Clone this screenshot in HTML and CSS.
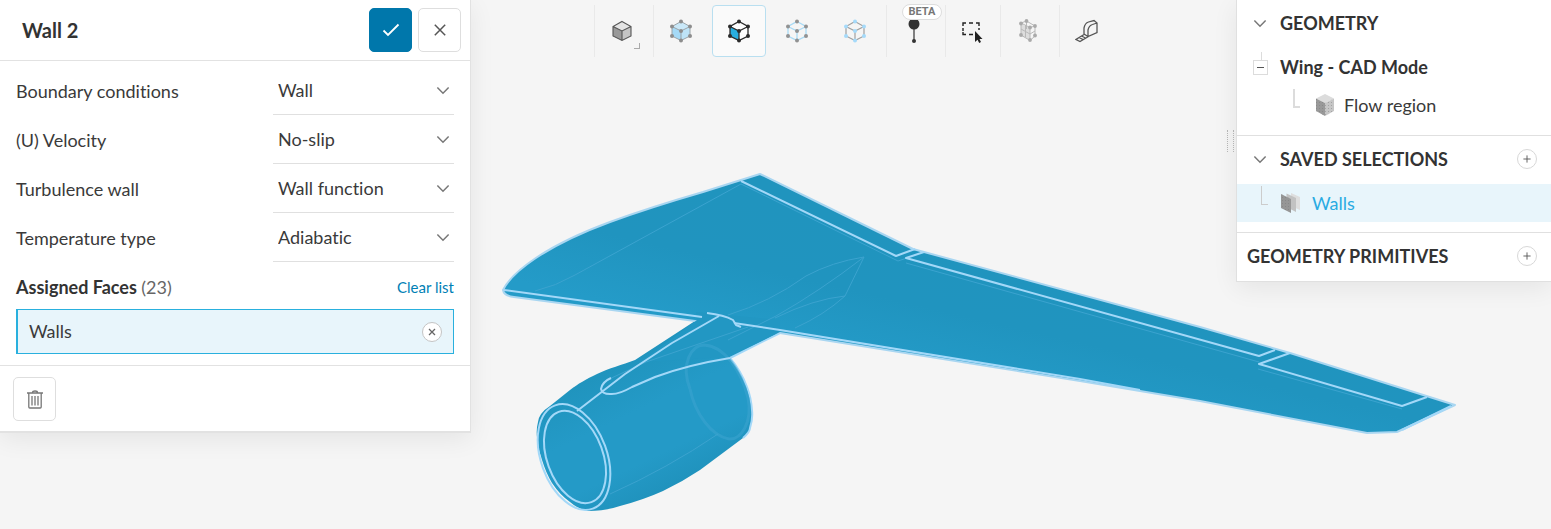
FILE: index.html
```html
<!DOCTYPE html>
<html lang="en">
<head>
<meta charset="utf-8">
<title>Wall 2 – Boundary condition</title>
<meta name="viewport" content="width=device-width, initial-scale=1">
<link rel="stylesheet" href="styles.css">
</head>
<body>
<svg class="sprite" aria-hidden="true">
  <defs>
    <symbol id="chevron" viewBox="0 0 12 8"><path d="M1 1.3 6 6.5 11 1.3" fill="none" stroke="currentColor" stroke-width="1.3"/></symbol>
    <symbol id="plus" viewBox="0 0 20 20"><path d="M10 6v8M6 10h8" fill="none" stroke="currentColor" stroke-width="1"/></symbol>
    <g id="cube-edges"><path d="M12 2.5 21 7.5V17L12 21.5 3 17V7.5ZM3 7.5 12 12 21 7.5M12 12V21.5"/></g>
    <g id="cube-nodes"><circle cx="12" cy="2.5" r="2"/><circle cx="21" cy="7.5" r="2"/><circle cx="21" cy="17" r="2"/><circle cx="12" cy="21.5" r="2"/><circle cx="3" cy="17" r="2"/><circle cx="3" cy="7.5" r="2"/><circle cx="12" cy="12" r="2"/></g>
    <pattern id="dots" width="3" height="3" patternUnits="userSpaceOnUse"><rect width="1" height="1" fill="#777" opacity=".45"/></pattern>
  </defs>
</svg>
<main class="workbench">
  <svg class="model" viewBox="0 0 1551 529" role="img" aria-label="Wing with engine nacelle">
    <defs>
      <linearGradient id="wing" gradientUnits="userSpaceOnUse" x1="760" y1="200" x2="730" y2="330">
        <stop offset="0" stop-color="#2094be"/><stop offset=".5" stop-color="#2094bf"/><stop offset="1" stop-color="#249bc8"/>
      </linearGradient>
      <linearGradient id="nacelle" gradientUnits="userSpaceOnUse" x1="610" y1="370" x2="670" y2="495">
        <stop offset="0" stop-color="#2094be"/><stop offset=".35" stop-color="#249ac7"/><stop offset=".7" stop-color="#249ac7"/><stop offset="1" stop-color="#1f91bb"/>
      </linearGradient>
    </defs>
    <path fill="url(#nacelle)" d="M695 321 635 360C622 365 609 368 597 374 586 379 578 384 570 390L550 406Q539 413 538 422 536 430 537 437 538 449 542 460 546 473 552 483 560 495 570 502 578 509 588 511 606 511 620 506 643 500 663 491 682 482 700 470L743 438Q750 432 750 428 753 419 752 410 751 397 747 387 741 371 730 358L780 333 820 310Z"/>
    <path class="edge" d="M730 358 780 333M730 358Q741 371 747 387 751 397 752 410 753 419 750 428 750 432 743 438"/>
    <path class="halo" fill="url(#wing)" d="M503 290C512 272 545 246 610 222 640 211 672 201 703 192L760 174 913 249 1200 327 1290 353 1455 405 1397 432 1367 433 1200 401 1080 381 780 333 695 321 514 297Q504 296 503 290Z"/>
    <path class="skin" d="M696 312 780 320V332L728 357 640 362 697 320Z"/>
    <g class="ghost">
      <path d="M535 291Q556 286 575 275L741 184 898 261 907 258M906 263 1259 362M1258 369 1402 409"/>
      <path d="M728 315Q770 302 806 276 832 262 864 257L845 296Q814 299 775 318M864 257Q820 291 776 316L728 340M845 296Q824 315 795 328M748 327 646 362 605 381"/>
      <path class="rear" d="M690 389C680 363 692 345 704 345 724 346 741 370 748 398 753 422 741 440 729 439 711 436 695 413 690 389"/>
      <path d="M718 434Q668 468 610 494"/>
    </g>
    <g class="edge">
      <path d="M504 290 702 317M734 323 780 330 1080 379 1140 390"/>
      <path d="M741 181 896 256 915 249M924 252 906 258 1259 356 1275 350M1290 353 1259 364 1402 406 1427 397"/>
      <path d="M707 313Q724 315 733 320L736 325 741 327M719 316 672 343 625 374 577 411M611 378Q602 382 601 389 602 394 610 394 618 395 632 387L655 377Q687 365 730 358"/>
      <ellipse cx="574" cy="457" rx="33" ry="55" transform="rotate(-20 574 457)"/>
      <ellipse cx="575" cy="457" rx="28" ry="48" transform="rotate(-20 575 457)"/>
      <path d="M1451 406 1402 430"/>
    </g>
  </svg>

  <section class="panel settings">
    <header class="settings-head">
      <h1>Wall 2</h1>
      <button class="btn btn-primary" aria-label="Apply"><svg width="18" height="14" viewBox="0 0 18 14"><path d="M1.500 7.500 6 12 16.500 1.500" fill="none" stroke="currentColor" stroke-width="1.800"/></svg></button>
      <button class="btn" aria-label="Close"><svg width="12" height="12" viewBox="0 0 12 12"><path d="M.8.8 11.200 11.200M11.200.8.8 11.200" fill="none" stroke="currentColor" stroke-width="1.500"/></svg></button>
    </header>
    <div class="settings-body">
      <div class="field"><label for="bc">Boundary conditions</label><div class="pick"><select id="bc"><option>Wall</option></select><svg class="chev"><use href="#chevron"/></svg></div></div>
      <div class="field"><label for="vel">(U) Velocity</label><div class="pick"><select id="vel"><option>No-slip</option></select><svg class="chev"><use href="#chevron"/></svg></div></div>
      <div class="field"><label for="turb">Turbulence wall</label><div class="pick"><select id="turb"><option>Wall function</option></select><svg class="chev"><use href="#chevron"/></svg></div></div>
      <div class="field"><label for="temp">Temperature type</label><div class="pick"><select id="temp"><option>Adiabatic</option></select><svg class="chev"><use href="#chevron"/></svg></div></div>
      <div class="assigned">
        <h2>Assigned Faces <span>(23)</span></h2>
        <a href="#clear">Clear list</a>
      </div>
      <div class="chip">
        <span>Walls</span>
        <button class="round" aria-label="Remove Walls"><svg width="8" height="8" viewBox="0 0 8 8"><path d="M1 1 7 7M7 1 1 7" fill="none" stroke="#666" stroke-width="1.300"/></svg></button>
      </div>
    </div>
    <footer class="settings-foot">
      <button class="btn" aria-label="Delete"><svg width="16" height="19" viewBox="0 0 16 19"><path d="M0 3H16M5.500 2.500Q5.500 1 8 1T10.500 2.500M1.800 3V17Q1.800 18 2.800 18H13.200Q14.200 18 14.200 17V3M5 6V15.500M8 6V15.500M11 6V15.500" fill="none" stroke="#777" stroke-width="1.300"/></svg></button>
    </footer>
  </section>

  <nav class="toolbar" aria-label="View and selection">
    <div class="group">
      <button class="tool" aria-label="Shading"><svg class="icon" viewBox="0 0 24 24"><path fill="#e4e4e4" d="M12 2.500 21 7.500 12 12 3 7.500Z"/><path fill="#999" d="M3 7.500 12 12V21.500L3 17Z"/><path fill="#c4c4c4" d="M21 7.500 12 12V21.500L21 17Z"/><use href="#cube-edges" fill="none" stroke="#555" stroke-width="1.100"/></svg><i class="corner"></i></button>
    </div>
    <div class="group">
      <button class="tool" aria-label="Select volumes"><svg class="icon" viewBox="0 0 24 24"><path fill="#c9e8f8" d="M12 2.500 21 7.500 12 12 3 7.500Z"/><path fill="#a5daf7" d="M3 7.500 12 12V21.500L3 17Z"/><path fill="#bde3f7" d="M21 7.500 12 12V21.500L21 17Z"/><use href="#cube-edges" fill="none" stroke="#9aa3a8"/><use href="#cube-nodes" fill="#8d8d8d"/></svg></button>
      <button class="tool active" aria-pressed="true" aria-label="Select faces"><svg class="icon" viewBox="0 0 24 24"><path fill="#fff" d="M12 2.500 21 7.500V17L12 21.500 3 17V7.500Z"/><path fill="#29aee0" d="M3 7.500 12 12V21.500L3 17Z"/><use href="#cube-edges" fill="none" stroke="#2b2b2b" stroke-width="1.300"/><use href="#cube-nodes" fill="#2b2b2b"/></svg></button>
      <button class="tool" aria-label="Select edges"><svg class="icon" viewBox="0 0 24 24"><use href="#cube-edges" fill="none" stroke="#a8daf5" stroke-width="1.300"/><use href="#cube-nodes" fill="#929292"/></svg></button>
      <button class="tool" aria-label="Select nodes"><svg class="icon" viewBox="0 0 24 24"><use href="#cube-edges" fill="none" stroke="#a0a0a0" stroke-width="1.200"/><use href="#cube-nodes" fill="#a5dafa"/></svg></button>
    </div>
    <div class="group">
      <button class="tool" aria-label="Probe point"><svg class="icon" viewBox="0 0 24 24"><circle cx="12" cy="5" r="5.500" fill="#333"/><path d="M12 8V21" stroke="#333" stroke-width="1.200"/><circle cx="12" cy="22" r="2" fill="#333"/></svg></button>
      <span class="beta">BETA</span>
    </div>
    <div class="group tight">
      <button class="tool" aria-label="Box select"><svg class="icon" viewBox="0 0 24 24"><path d="M2 7V4H5M8 4H12M15 4H18V7M2 9V12M18 9V11M2 13V15.500H5M8 15.500H12" fill="none" stroke="#222" stroke-width="1.400"/><path d="M14 12V23L16.500 20.700 18.200 24 20 23 18.500 20H21.500Z" fill="#222"/></svg></button>
    </div>
    <div class="group">
      <button class="tool" aria-label="Mesh clip"><svg class="icon" viewBox="0 0 24 24"><path d="M5 5 14 9V21L5 17Z" fill="#ddd"/><path d="M5 4 10.500 2 19 7V17L14 21.500 5 16ZM5 4 14 8.500 19 7M14 8.500V21.500M9.500 6V18M5 10 14 15 19 12M10.500 2V10" fill="none" stroke="#b9b9b9"/><g fill="#aaa"><circle cx="5" cy="4.500" r="1.900"/><circle cx="10.500" cy="2" r="1.900"/><circle cx="19" cy="7" r="1.900"/><circle cx="14" cy="8.500" r="1.900"/><circle cx="5" cy="16" r="1.900"/><circle cx="19" cy="16.500" r="1.900"/><circle cx="14" cy="21" r="1.900"/></g></svg></button>
    </div>
    <div class="group tight">
      <button class="tool" aria-label="Measure"><svg class="icon" viewBox="0 0 24 24"><path d="M9 15V9Q10 4 13.500 3L19 1.500 22 4V13.500L13 17.500 9 15M13 17.500V11Q14 6.500 17.500 5.500L22 4M9 15.500 1 20.500 5 22.500 13.500 17.500M4 18.500 8 20.500M6.500 17 10.500 19" fill="none" stroke="#555" stroke-width="1.300"/></svg></button>
    </div>
  </nav>

  <aside class="panel tree">
    <i class="grip"></i>
    <section class="branch">
      <div class="row head"><svg class="chev"><use href="#chevron"/></svg><h2>GEOMETRY</h2></div>
      <div class="row part"><button class="toggle" aria-label="Collapse"></button><h3>Wing - CAD Mode</h3></div>
      <div class="row leaf"><i class="elbow"></i><svg class="icon" viewBox="0 0 24 24"><path fill="#dcdcdc" d="M12 1 21 5.500 12 10 3 5.500Z"/><path fill="#999" d="M3 5.500 12 10V23L3 18Z"/><path fill="#c6c6c6" d="M21 5.500 12 10V23L21 18Z"/><path fill="url(#dots)" d="M3 5.500 12 10 21 5.500V18L12 23 3 18Z"/></svg><span>Flow region</span></div>
    </section>
    <section class="branch">
      <div class="row head"><svg class="chev"><use href="#chevron"/></svg><h2>SAVED SELECTIONS</h2><button class="round add" aria-label="Add selection"><svg width="20" height="20"><use href="#plus"/></svg></button></div>
      <div class="row selected"><i class="elbow"></i><svg class="icon" viewBox="0 0 24 24"><path fill="#dedede" d="M12 2 21 6V19L12 15Z"/><path fill="#c2c2c2" d="M7.500 2.500 17 7V21L7.500 16Z"/><path fill="#969696" d="M2 3 12 8V22L2 17Z"/><path fill="url(#dots)" d="M2 3 12 8V22L2 17Z"/></svg><span>Walls</span></div>
    </section>
    <section class="branch">
      <div class="row head root"><h2>GEOMETRY PRIMITIVES</h2><button class="round add" aria-label="Add primitive"><svg width="20" height="20"><use href="#plus"/></svg></button></div>
    </section>
  </aside>
</main>
</body>
</html>
```
FILE: styles.css
```css
* { box-sizing: border-box; }
body {
  margin: 0;
  background: #f5f5f5;
  color: #3a3a3a;
  font: 18px/24px Lato, "Open Sans", sans-serif;
  font-variant-ligatures: none;
}
h1, h2, h3 { margin: 0; font-size: 18px; line-height: 24px; font-weight: 700; color: #333; }
button, select { font: inherit; color: inherit; padding: 0; margin: 0; }
button { cursor: pointer; }
.sprite { position: absolute; width: 0; height: 0; }

.workbench {
  display: grid;
  grid-template-columns: 471px minmax(0, 1fr) 315px;
  align-items: start;
  min-height: 100vh;
  overflow: hidden;
}
.model {
  grid-area: 1 / 1 / 2 / -1;
  width: 100%;
  height: 100%;
}
.halo { stroke: #a9d6f1; stroke-width: 2; stroke-linejoin: round; }
.skin { fill: #2297c3; }
.edge { fill: none; stroke: #a3d8f8; stroke-width: 2; stroke-linejoin: round; }
.ghost { fill: none; stroke: #3ba3cf; stroke-width: 1; }
.ghost .rear { stroke-width: 3; opacity: .6; }

.panel {
  background: #fff;
  box-shadow: 0 6px 24px rgba(0, 0, 0, .07);
}
.settings {
  grid-area: 1 / 1;
  border-right: 1px solid #e2e2e2;
  border-bottom: 2px solid #e2e2e2;
}
.settings-head {
  display: flex;
  align-items: center;
  gap: 6px;
  height: 61px;
  padding: 0 9px 0 22px;
  border-bottom: 1px solid #e2e2e2;
}
.settings-head h1 { flex: 1; font-size: 20px; }
.btn {
  display: flex;
  align-items: center;
  justify-content: center;
  width: 43px;
  height: 44px;
  background: #fff;
  border: 1px solid #dedede;
  border-radius: 5px;
  color: #555;
}
.btn-primary { background: #0077ab; border-color: #0077ab; color: #fff; }
.settings-body { padding: 5px 16px 11px; }
.field {
  display: grid;
  grid-template-columns: minmax(0, 1fr) 181px;
  align-items: center;
}
.pick { display: grid; align-items: center; border-bottom: 1px solid #e0e0e0; }
.pick select {
  grid-area: 1 / 1;
  width: 100%;
  height: 48px;
  padding: 0 30px 0 5px;
  background: none;
  border: 0;
  appearance: none;
}
.chev { width: 14px; height: 9px; color: #777; }
.pick .chev { grid-area: 1 / 1; justify-self: end; margin-right: 4px; pointer-events: none; }
.assigned {
  display: flex;
  align-items: center;
  justify-content: space-between;
  height: 47px;
  padding-top: 2px;
}
.assigned span { font-weight: 400; color: #666; }
.assigned a { color: #0080b5; font-size: 15px; text-decoration: none; }
.chip {
  display: flex;
  align-items: center;
  justify-content: space-between;
  height: 45px;
  padding: 0 11px;
  background: #e8f5fb;
  border: 1px solid #29b0de;
  border-left-width: 2px;
}
.chip span { padding-bottom: 2px; }
.round {
  display: flex;
  align-items: center;
  justify-content: center;
  width: 20px;
  height: 20px;
  background: #fff;
  border: 1px solid #c4c4c4;
  border-radius: 50%;
}
.settings-foot { padding: 11px 13px 10px; border-top: 1px solid #e2e2e2; }

.toolbar {
  grid-area: 1 / 2;
  display: flex;
  justify-content: center;
  padding-top: 5px;
}
.group {
  position: relative;
  display: flex;
  gap: 4px;
  padding-right: 4px;
  border-left: 1px solid #e9e9e9;
}
.group.tight { padding-right: 0; }
.tool {
  position: relative;
  display: flex;
  align-items: center;
  justify-content: center;
  width: 54px;
  height: 52px;
  background: none;
  border: 1px solid transparent;
  border-radius: 4px;
}
.tool.active { background: #fafafa; border-color: #b9dff0; }
.icon { width: 24px; height: 24px; flex: none; }
.corner {
  position: absolute;
  right: 8px;
  bottom: 7px;
  width: 6px;
  height: 6px;
  border: solid #aaa;
  border-width: 0 1px 1px 0;
}
.beta {
  position: absolute;
  top: -1px;
  left: 15px;
  padding: 0 6px;
  background: #fff;
  border: 1px solid #ddd;
  border-radius: 8px;
  color: #777;
  font: 700 11px/14px Roboto, sans-serif;
}

.tree {
  grid-area: 1 / 3;
  position: relative;
  border: solid #e0e0e0;
  border-width: 0 0 1px 1px;
}
.grip {
  position: absolute;
  left: -10px;
  top: 130px;
  width: 7px;
  height: 22px;
  border: dotted #b4b4b4;
  border-width: 0 1px;
}
.branch + .branch { border-top: 1px solid #e0e0e0; }
.branch:nth-of-type(2) { padding-bottom: 10px; }
.row { display: flex; align-items: center; }
.head { height: 46px; margin-bottom: 2px; padding: 0 14px 0 16px; gap: 13px; }
.head.root { padding-left: 10px; }
.head h2 { flex: 1; }
.add { border-color: #d8d8d8; color: #555; }
.part { height: 38px; padding-left: 16px; gap: 12px; }
.toggle {
  position: relative;
  display: grid;
  place-items: center;
  width: 15px;
  height: 15px;
  background: #fff;
  border: 1px solid #dcdcdc;
}
.toggle::before { content: ""; width: 7px; height: 1px; background: #555; }
.toggle::after {
  content: "";
  position: absolute;
  left: 7px;
  bottom: 100%;
  width: 1px;
  height: 9px;
  background: #dcdcdc;
}
.leaf { height: 38px; padding-left: 56px; gap: 7px; margin-bottom: 11px; }
.elbow {
  width: 7px;
  height: 19px;
  margin-bottom: 14px;
  border: solid #dcdcdc;
  border-width: 0 0 2px 2px;
}
.leaf .icon { margin-left: 6px; }
.selected {
  height: 38px;
  padding: 0 0 1px 24px;
  gap: 9px;
  background: #e8f5fb;
  color: #29abe2;
}
.selected .icon { margin-left: 2px; }
.selected .elbow { border-width: 0 0 1px 1px; border-color: #ccc; }
```
